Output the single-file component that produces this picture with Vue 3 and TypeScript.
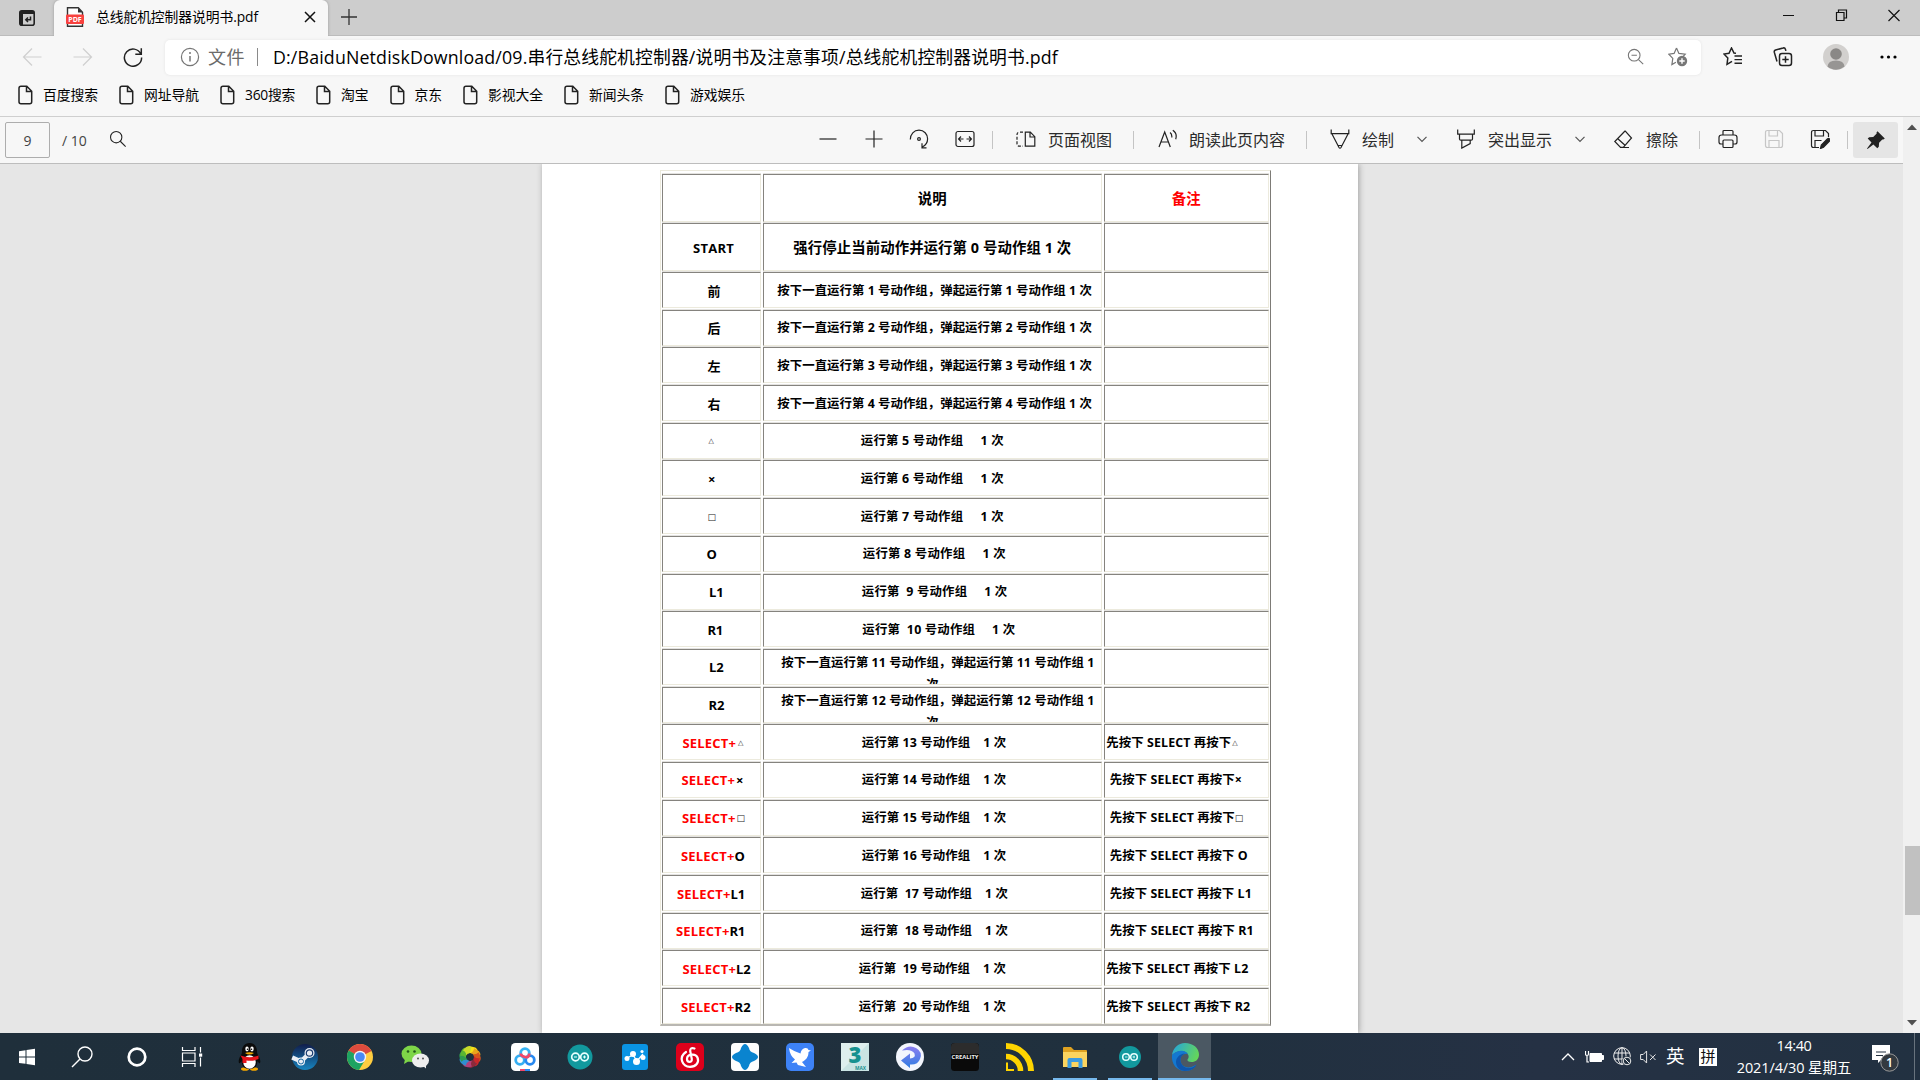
<script setup lang="ts">
import type { Directive } from 'vue'

interface Item { icon?: string; text?: string; gap: number; w: number; cls?: string }
interface Piece { text: string; gap: number; w: number; cls?: string }
interface Row { key: Piece[]; desc: Piece[]; note: Piece[]; cls?: string }

/* Spreads the glyphs of a label so that it fills the given width. */
const vFit: Directive<HTMLElement, number> = {
  mounted(el, { value }) {
    if (!value) return
    const n = (el.textContent ?? '').length
    const natural = el.getBoundingClientRect().width
    el.style.letterSpacing = `${(value - natural) / n}px`
  },
}

const icons: Record<string, string> = {
  back: '<path d="M19.500 10H1.500M10 1.500 1.500 10l8.500 8.500"/>',
  forward: '<path d="M.5 10h18M10 1.500 18.500 10 10 18.500"/>',
  reload: '<path d="M17.800 7A8.600 8.600 0 1 0 18.600 10.500M18.300 1.200v6h-6" stroke-width="1.500"/>',
  info: '<circle cx="10" cy="10" r="8.600"/><path d="M10 9v5.500" stroke-width="1.500"/><circle cx="10" cy="6" r="1" fill="currentColor" stroke="none"/>',
  file: '<path d="M6 1.200h5.800l4.900 5v10.600q0 2-2 2H6q-2 0-2-2V3.200q0-2 2-2zM11.500 1.400v5h5" stroke-width="1.500"/>',
  zoomout: '<circle cx="8" cy="8" r="6.500"/><path d="M12.800 12.800 18 18M5 8h6"/>',
  staradd: '<path d="m8.500 1 2.400 5.400 6.300.8-2.500 2.600M8.500 1 6.100 6.400.8 7.200l4 4.200-.9 6.200 4-2.400"/><circle cx="14" cy="14" r="5.200" fill="#777" stroke="none"/><path d="M14 11.300v5.400M11.300 14h5.400" stroke="#fff" stroke-width="1.400"/>',
  favs: '<path d="m13 6.300-2-.2L8.500 1 6 6.200l-5 .8 3.800 4L4 17.300l5-3" stroke-width="1.500"/><path d="M11.500 9H19M11.500 12.600H19M11.500 16.200H19" stroke-width="1.400"/>',
  collect: '<rect x="6.500" y="6.500" width="12" height="12" rx="2.500" stroke-width="1.500"/><path d="M12.500 9.300v6.400M9.300 12.500h6.400M4 14.500 1.300 5.300c-.3-1.200.3-2 1.300-2.300l7.500-2c1-.3 2 .2 2.300 1.200l.5 1.700" stroke-width="1.500"/>',
  search: '<circle cx="8" cy="8" r="6.300"/><path d="m12.500 12.500 6 6"/>',
  minus: '<path d="M1.500 10h17"/>',
  plus: '<path d="M1.500 10h17M10 1.500v17"/>',
  rotate: '<path d="M1.300 10.500C1.300 5 5 1.200 10 1.200s8.600 4 8.600 8.600c0 3.500-2 6.600-5.300 8.200M17.500 18.900H13v-4.600"/><circle cx="10" cy="10" r="1.400"/>',
  fit: '<rect x="1" y="2.500" width="18" height="15" rx="2"/><path d="M3.800 10h4.700M6 7.500 3.600 10 6 12.500M16.200 10h-4.700M14 7.500l2.400 2.500-2.400 2.500"/>',
  pages: '<path d="M9.300 3.200h5l4.500 4.500v9.500H9.300zM14 3.400V8h4.600"/><path d="M7 3.200H3.500Q1 3.200 1 5.700v9Q1 17.200 3.500 17.200H7" stroke-dasharray="3 1.700"/>',
  read: '<path d="m1 18 5.700-15L12.300 18M3 13h7.500M12 3.500c1.500 1 2 3 1.800 5M14.800 1.200c3 2 4 5.500 2.900 9"/>',
  pen: '<path d="M1.200.5v4.200h17.600V.5M2 5l7 13.500c.5.900 1.500.9 2 0L18 5M8.500 16.500h3"/>',
  marker: '<path d="M1.700.5v4.700h16.600V.5M3.500 5.500V10q0 1.200 1.200 1.200h10.600q1.200 0 1.200-1.200V5.500M5.800 11.500v7.600l8.400-4.500v-3"/>',
  chevron: '<path d="m5.500 7.800 4.500 4.500 4.500-4.500"/>',
  eraser: '<path d="M12 2 1.800 12.500l5.500 5.700 3 .2L18.500 9 12.300 2zM4.800 9.700l7.500 6.800M7 18.500h9"/>',
  print: '<path d="M5 6V2.500Q5 1.500 6 1.500h8q1 0 1 1V6M5 15H3q-2 0-2-2V8.500Q1 6 3.500 6h13Q19 6 19 8.500V13q0 2-2 2h-2"/><rect x="5" y="11" width="10" height="7.500" rx="1"/>',
  save: '<path d="M1.500 3.500q0-2 2-2h12l3 3v12q0 2-2 2h-13q-2 0-2-2zM5 1.700V7h8.500V1.700M5 18.300V11.500h10v6.800"/>',
  saveas: '<path d="M9 18.500H3.500q-2 0-2-2v-13q0-2 2-2h12l3 3V8M5 1.700V7h8.500V1.700M5 18.300V11.500h6.500"/><path d="m10.500 19.500.8-3.500 6-6q1.300-1 2.200 0t0 2l-6 6.300z" fill="currentColor"/>',
  pin: '<path d="m11.500 1.200 7.300 7.300-1.500 1-1-.1-3.200 3.300-.3 4-1.500 1.500-3.900-3.700L1.500 19l-.5-.5 4.500-6L1.700 8.600l1.500-1.400 4-.2L10.700 3.500l-.2-1z" fill="currentColor" stroke="none"/>',
}

const bookmarks = [
  { text: '百度搜索', w: 55 }, { text: '网址导航', w: 55 }, { text: '360搜索', w: 50 }, { text: '淘宝', w: 27.5 },
  { text: '京东', w: 27.5 }, { text: '影视大全', w: 55 }, { text: '新闻头条', w: 55 }, { text: '游戏娱乐', w: 55 },
]

const tools: Item[] = [
  { icon: 'minus', gap: 691, w: 20 }, { icon: 'plus', gap: 26, w: 20 }, { icon: 'rotate', gap: 25, w: 20 },
  { icon: 'fit', gap: 26, w: 20 }, { gap: 17, w: 1, cls: 'sep' },
  { icon: 'pages', gap: 23, w: 20 }, { text: '页面视图', gap: 12, w: 64 }, { gap: 21, w: 1, cls: 'sep' },
  { icon: 'read', gap: 24, w: 20 }, { text: '朗读此页内容', gap: 11, w: 96 }, { gap: 21, w: 1, cls: 'sep' },
  { icon: 'pen', gap: 23, w: 20 }, { text: '绘制', gap: 12, w: 32 }, { icon: 'chevron', gap: 18, w: 20, cls: 'thin' },
  { icon: 'marker', gap: 24, w: 20 }, { text: '突出显示', gap: 12, w: 64 }, { icon: 'chevron', gap: 18, w: 20, cls: 'thin' },
  { icon: 'eraser', gap: 23, w: 20 }, { text: '擦除', gap: 13, w: 32 }, { gap: 21, w: 1, cls: 'sep' },
  { icon: 'print', gap: 18, w: 20 }, { icon: 'save', gap: 26, w: 20, cls: 'off' }, { icon: 'saveas', gap: 26, w: 20 },
  { gap: 17, w: 1, cls: 'sep' },
]

/* gap is measured from the inner left edge of the table cell */
const p = (text: string, gap: number, w: number, cls = ''): Piece => ({ text, gap, w, cls })
const hold = (n: number): Piece[] => [p(`按下一直运行第 ${n} 号动作组，弹起运行第 ${n} 号动作组 1 次`, 13.5, 314.500)]
const wrap = (n: number): Piece[] => [p(`按下一直运行第 ${n} 号动作组，弹起运行第 ${n} 号动作组 1`, 17.5, 313), p('次', 162.500, 12.5)]
const sel = (x: number, key: string, w: number, cls = ''): Piece[] => [p('SELECT+', x + 0.5, 53.500, 'red'), p(key, cls === 'tri' ? 2 : cls ? 1 : 0, w, cls)]

const rows: Row[] = [
  { key: [], desc: [p('说明', 154, 29)], note: [p('备注', 66.500, 29, 'red')], cls: 'tall' },
  { key: [p('START', 30, 41)], desc: [p('强行停止当前动作并运行第 0 号动作组 1 次', 29.500, 278)], note: [], cls: 'tall' },
  { key: [p('前', 44.500, 12.5)], desc: hold(1), note: [] },
  { key: [p('后', 44.500, 12.5)], desc: hold(2), note: [] },
  { key: [p('左', 44.500, 12.5)], desc: hold(3), note: [] },
  { key: [p('右', 44.500, 12.5)], desc: hold(4), note: [] },
  { key: [p('△', 45.500, 0, 'tri')], desc: [p('运行第 5 号动作组     1 次', 97, 143)], note: [] },
  { key: [p('×', 45, 0)], desc: [p('运行第 6 号动作组     1 次', 97, 143)], note: [] },
  { key: [p('□', 44.500, 0, 'box')], desc: [p('运行第 7 号动作组     1 次', 97, 143)], note: [] },
  { key: [p('O', 43.500, 0)], desc: [p('运行第 8 号动作组     1 次', 99, 143)], note: [] },
  { key: [p('L1', 46, 14.500)], desc: [p('运行第  9 号动作组     1 次', 98, 145.500)], note: [] },
  { key: [p('R1', 44.500, 15.500)], desc: [p('运行第  10 号动作组     1 次', 98.500, 153)], note: [] },
  { key: [p('L2', 46, 14.500)], desc: wrap(11), note: [], cls: 'wrap' },
  { key: [p('R2', 45.500, 16)], desc: wrap(12), note: [], cls: 'wrap' },
  { key: sel(19, '△', 0, 'tri'), desc: [p('运行第 13 号动作组    1 次', 98, 144.500)], note: [p('先按下 SELECT 再按下', 1, 125), p('△', 1, 0, 'tri')] },
  { key: sel(18, '×', 0, 'mul'), desc: [p('运行第 14 号动作组    1 次', 98, 144.500)], note: [p('先按下 SELECT 再按下', 4.500, 125), p('×', 0, 0)] },
  { key: sel(18.500, '□', 0, 'box'), desc: [p('运行第 15 号动作组    1 次', 98, 144.500)], note: [p('先按下 SELECT 再按下', 4.500, 125), p('□', 0, 0, 'box')] },
  { key: sel(17.500, 'O', 10), desc: [p('运行第 16 号动作组    1 次', 98, 144.500)], note: [p('先按下 SELECT 再按下 O', 4.500, 138)] },
  { key: sel(13.500, 'L1', 14.500), desc: [p('运行第  17 号动作组    1 次', 97, 147)], note: [p('先按下 SELECT 再按下 L1', 4.500, 142)] },
  { key: sel(12.500, 'R1', 15.500), desc: [p('运行第  18 号动作组    1 次', 97, 147)], note: [p('先按下 SELECT 再按下 R1', 4.500, 144)] },
  { key: sel(19, 'L2', 14.500), desc: [p('运行第  19 号动作组    1 次', 95, 147)], note: [p('先按下 SELECT 再按下 L2', 1, 142)] },
  { key: sel(17.500, 'R2', 16.500), desc: [p('运行第  20 号动作组    1 次', 95, 147)], note: [p('先按下 SELECT 再按下 R2', 1, 144)] },
]

const petals = Array.from({ length: 10 }, (_, i) => ({
  turn: `rotate(${i * 36} 14 14)`,
  fill: ['#f7e017', '#e9a51c', '#d9541c', '#c9282a', '#8a2a3b', '#b2407a', '#2f8fd0', '#2f9a50', '#5cb531', '#c9db2c'][i],
}))
</script>

<template>
  <div class="screen">
    <div class="tabs">
      <div class="tabmenu">
        <svg width="16" height="16" viewBox="0 0 16 16"><rect x=".8" y=".8" width="14.400" height="14.400" rx="2" fill="none" stroke="#222" stroke-width="1.600" /><path d="M1 1h14v3H4v11H1z" fill="#222" /><path d="M11.500 6.500v3.200H7M9 7.500 6.800 9.700 9 12" fill="none" stroke="#222" stroke-width="1.500" /></svg>
      </div>
      <div class="tab">
        <svg width="18" height="20" viewBox="0 0 18 20"><path d="M1.500.8h10.800l4.200 4.400v14H1.500z" fill="#fff" stroke="#333" stroke-width="1.400" /><path d="M12 .8v4.700h4.500z" fill="#333" /><rect y="7.500" width="18" height="9.500" rx="1" fill="#f8423f" /><text x="9" y="14.800" text-anchor="middle" font-size="7" font-weight="700" fill="#fff">PDF</text></svg>
        <span class="title"><span v-fit="162">总线舵机控制器说明书.pdf</span></span>
        <svg class="close" width="12" height="12" viewBox="0 0 12 12"><path d="m1 1 10 10M11 1 1 11" stroke="#111" stroke-width="1.500" /></svg>
      </div>
      <svg class="newtab" width="18" height="18" viewBox="0 0 18 18"><path d="M9 1v16M1 9h16" stroke="#333" stroke-width="1.300" /></svg>
      <svg class="winctl" width="118" height="14" viewBox="0 0 118 14" fill="none" stroke="#111" stroke-width="1.200">
        <path d="M0 7.500h11M105.500 2l11 11M116.500 2l-11 11" /><path d="M53.500 4.500h7.500v8h-7.500zM55.500 4.500v-2.500H63.500v8H61" />
      </svg>
    </div>

    <div class="address">
      <svg class="ico dim" viewBox="0 0 20 20" v-html="icons.back" />
      <svg class="ico dim fwd" viewBox="0 0 20 20" v-html="icons.forward" />
      <svg class="ico rel" viewBox="0 0 20 20" v-html="icons.reload" />
      <div class="box-url">
        <svg class="ico grey" viewBox="0 0 20 20" v-html="icons.info" />
        <span class="scheme"><span v-fit="37">文件</span></span>
        <i class="bar" />
        <span class="url"><span v-fit="785">D:/BaiduNetdiskDownload/09.串行总线舵机控制器/说明书及注意事项/总线舵机控制器说明书.pdf</span></span>
        <svg class="ico grey zo" viewBox="0 0 20 20" v-html="icons.zoomout" />
        <svg class="ico grey sa" viewBox="0 0 20 20" v-html="icons.staradd" />
      </div>
      <svg class="ico fv" viewBox="0 0 20 20" v-html="icons.favs" />
      <svg class="ico co" viewBox="0 0 20 20" v-html="icons.collect" />
      <svg class="avatar" viewBox="0 0 26 26"><circle cx="13" cy="13" r="13" fill="#d2d0ce" /><circle cx="13" cy="10" r="5.800" fill="#8a8886" /><path d="M4.500 22.500Q5 16.500 13 16.500t8.500 6A13 13 0 0 1 4.500 22.500" fill="#979593" /></svg>
      <svg class="dots" viewBox="0 0 18 4"><circle cx="2" cy="2" r="1.600" /><circle cx="8.500" cy="2" r="1.600" /><circle cx="15" cy="2" r="1.600" /></svg>
    </div>

    <div class="bookmarks">
      <div v-for="b in bookmarks" :key="b.text" class="bm">
        <svg class="ico" viewBox="0 0 20 20" v-html="icons.file" />
        <span class="lab" :style="{ width: b.w + 'px' }"><span v-fit="b.w">{{ b.text }}</span></span>
      </div>
    </div>

    <div class="viewer">
      <div class="main">
        <div class="toolbar">
          <div class="pageno">9</div>
          <span class="of">/ 10</span>
          <svg class="ico find" viewBox="0 0 20 20" v-html="icons.search" />
          <template v-for="(t, i) in tools" :key="i">
            <svg v-if="t.icon" class="ico" :class="t.cls" viewBox="0 0 20 20" :style="{ marginLeft: t.gap + 'px' }" v-html="icons[t.icon]" />
            <span v-else class="tl" :class="t.cls" :style="{ marginLeft: t.gap + 'px', width: t.w + 'px' }"><span v-if="t.text" v-fit="t.w">{{ t.text }}</span></span>
          </template>
          <div class="pinbtn"><svg class="ico" viewBox="0 0 20 20" v-html="icons.pin" /></div>
        </div>
        <div class="canvas">
          <div class="page">
            <div class="table">
              <div v-for="(r, i) in rows" :key="i" class="row" :class="r.cls">
                <div v-for="(cell, c) in [r.key, r.desc, r.note]" :key="c" class="cell" :class="'c' + c">
                  <span v-for="(s, k) in cell" :key="k" class="piece" :class="s.cls" :style="{ marginLeft: s.gap + 'px' }"><span v-fit="s.w">{{ s.text }}</span></span>
                </div>
              </div>
            </div>
          </div>
        </div>
      </div>
      <div class="scroll">
        <svg width="12" height="7" viewBox="0 0 12 7"><path d="M6 .5 11 6H1z" fill="#505050" /></svg>
        <div class="thumb" />
        <svg width="12" height="7" viewBox="0 0 12 7"><path d="M6 6.500 11 1H1z" fill="#505050" /></svg>
      </div>
    </div>

    <div class="taskbar">
      <div class="slot"><svg viewBox="0 0 28 28"><path d="M6 8.200 12.500 7.200V13.500H6zM13.500 7 22 5.800v7.700H13.500zM6 14.500h6.500v6.300L6 19.900zM13.500 14.500H22v7.800L13.500 21z" fill="#fff" /></svg></div>
      <div class="slot"><svg viewBox="0 0 28 28"><circle cx="17" cy="11" r="7" fill="none" stroke="#fff" stroke-width="1.400" /><path d="M12 16 4 24" stroke="#fff" stroke-width="1.500" /></svg></div>
      <div class="slot"><svg viewBox="0 0 28 28"><circle cx="14" cy="14" r="8.300" fill="none" stroke="#fff" stroke-width="2.700" /></svg></div>
      <div class="slot"><svg viewBox="0 0 28 28"><path d="M4.500 4v3.500h12.500V4M4.500 24v-3.500h12.500V24M4.500 10h12.500v8H4.500zM22.500 4v5.500M22.500 14.500v9" fill="none" stroke="#fff" stroke-width="1.200" /><rect x="21" y="10.500" width="3.200" height="3.200" fill="#fff" /></svg></div>
      <div class="slot qq"><svg viewBox="0 0 28 28"><ellipse cx="9" cy="26" rx="4" ry="1.800" fill="#f5a800" /><ellipse cx="18" cy="26" rx="4" ry="1.800" fill="#f5a800" /><path d="M13.500 0C8.500 0 6 4 6 8c0 2-.5 3.500-1.500 5-1.600 2.500-2.200 5-1.500 7 .6 1 1.800-.5 2.500-2C6 24 9 26 13.500 26s7.500-2 8-8c.7 1.500 1.900 3 2.500 2 .7-2 .1-4.500-1.500-7-1-1.500-1.500-3-1.500-5 0-4-2.500-8-7.500-8" fill="#0b0b0b" /><ellipse cx="13.500" cy="19" rx="6.300" ry="6.700" fill="#fff" /><ellipse cx="11" cy="6" rx="1.700" ry="2.400" fill="#fff" /><ellipse cx="16" cy="6" rx="1.700" ry="2.400" fill="#fff" /><circle cx="11.500" cy="6.300" r=".8" /><circle cx="15.500" cy="6.300" r=".8" /><path d="M9 10q4.500-1.500 9 0-4.500 3-9 0" fill="#f5a800" /><path d="M4.500 12.500q9 3.500 18 0V16q-6 2.500-12 1.500V20H6.500v-4z" fill="#e5151c" /></svg></div>
      <div class="slot"><svg viewBox="0 0 28 28"><defs><linearGradient id="steam" x2="0" y2="1"><stop stop-color="#111d4b" /><stop offset="1" stop-color="#1785c0" /></linearGradient></defs><circle cx="14" cy="14" r="13" fill="url(#steam)" /><path d="M1.200 14.500 9 18M18.500 10 10.500 18" stroke="#e9eef5" stroke-width="4.500" /><circle cx="18.500" cy="10" r="5" fill="#e9eef5" /><circle cx="18.500" cy="10" r="3.200" fill="none" stroke="#1b3c70" stroke-width="1.200" /><circle cx="10" cy="18.500" r="4" fill="#e9eef5" /><circle cx="10" cy="18.500" r="2.500" fill="none" stroke="#1a6aa5" /></svg></div>
      <div class="slot"><svg viewBox="0 0 28 28"><circle cx="14" cy="14" r="13" fill="#ffcd40" /><path d="M14 14 2.500 7.800A13 13 0 0 1 25.500 8H14z" fill="#dd4b3e" /><path d="M14 14 2.700 7.500A13 13 0 0 0 13 27l6-10z" fill="#1da362" /><path d="M14 8h11.500L14 14z" fill="#dd4b3e" /><circle cx="14" cy="14" r="6.200" fill="#f4f4f4" /><circle cx="14" cy="14" r="4.800" fill="#4a8af4" /></svg></div>
      <div class="slot"><svg viewBox="0 0 28 28"><ellipse cx="10.500" cy="10.800" rx="10" ry="8.300" fill="#7ed648" /><path d="m4 16-1 5 5-3z" fill="#7ed648" /><circle cx="7" cy="8.500" r="1.300" fill="#23591c" /><circle cx="13.500" cy="8.500" r="1.300" fill="#23591c" /><ellipse cx="19.500" cy="17.500" rx="8.500" ry="7" fill="#eee" /><path d="m22 23 3 2.500V21z" fill="#eee" /><circle cx="17" cy="15.500" r="1" fill="#555" /><circle cx="22" cy="15.500" r="1" fill="#555" /></svg></div>
      <div class="slot"><svg viewBox="0 0 28 28"><path v-for="q in petals" :key="q.turn" d="M12 4.500Q19 2.500 21.500 6.500L16.500 10.500Q14 9.500 12 10.500 14 7 12 4.500z" :fill="q.fill" :transform="q.turn" /></svg></div>
      <div class="slot"><svg viewBox="0 0 28 28"><rect width="28" height="28" rx="4.500" fill="#fff" /><g fill="none" stroke-width="2.800"><circle cx="9" cy="17" r="4.300" stroke="#36aef2" /><circle cx="19" cy="17" r="4.300" stroke="#2788f0" /><circle cx="14" cy="10" r="4.300" stroke="#36b4f5" /></g><path d="M9.800 10.500q0 2.500 4.200 3.500t4.200-3.500" fill="none" stroke="#f2476a" stroke-width="2.800" /><path d="M9 26h5v2H9z" fill="#f2476a" /><path d="M14 26h5v2h-5z" fill="#2788f0" /></svg></div>
      <div class="slot"><svg viewBox="0 0 28 28"><circle cx="14" cy="14" r="12.500" fill="#12999e" /><g fill="none" stroke="#e8ffff" stroke-width="1.700"><circle cx="9.500" cy="14" r="3.800" /><circle cx="18.500" cy="14" r="3.800" /></g><path d="M8 14h3M17 14h3M18.500 12.500v3" stroke="#e8ffff" /></svg></div>
      <div class="slot"><svg viewBox="0 0 28 28"><rect x="1" y="1" width="26" height="26" rx="3" fill="#0a94e4" /><path d="m6 15 6-3 4 6 6-7" fill="none" stroke="#fff" stroke-width="1.300" /><circle cx="6" cy="15.500" r="2.500" fill="#fff" /><circle cx="12" cy="11" r="3" fill="#fff" /><circle cx="15.500" cy="18.500" r="3.500" fill="#fff" /><circle cx="22" cy="14.500" r="2.500" fill="#fff" /><circle cx="21" cy="8.500" r="1.600" fill="#fff" /></svg></div>
      <div class="slot"><svg viewBox="0 0 28 28"><rect width="28" height="28" rx="5" fill="#dd001b" /><path d="M18.500 5.500q-4.500-1.500-4.300 2.500l1.600 8c.4 4-4.800 3.800-4.800 0 0-5 8.500-6 10.500-1.500 2 5-1.500 9.300-7.500 9.300-7.500 0-12-9.500-4-14.800" fill="none" stroke="#fff" stroke-width="2.200" stroke-linecap="round" /></svg></div>
      <div class="slot"><svg viewBox="0 0 28 28"><rect width="28" height="28" rx="4" fill="#fdfdfd" /><path d="M10 5q4-8 8 0 .5 4 5 5 8 4 0 8-4.500 1-5 5-4 8-8 0-.5-4-5-5-8-4 0-8 4.500-1 5-5" fill="#0a84cf" /></svg></div>
      <div class="slot"><svg viewBox="0 0 28 28"><rect width="28" height="28" rx="5" fill="#3d82f6" /><path d="M3 5q6 4 11.500 5.500.5-4.500 4.500-5.500 3-.5 3.500 2l2.500.5-2.500 1.500c0 5-2.500 8-6.500 10l4 5-6-1.500q-3-.5-3.500-3l-5 .5 3.500-3.500Q4 13 3 5" fill="#fff" /></svg></div>
      <div class="slot"><svg viewBox="0 0 28 28"><rect width="28" height="28" fill="#c9e4e3" /><path d="M0 0h28L0 28z" fill="#deefee" /><text x="14" y="19.500" text-anchor="middle" font-size="22" font-weight="800" fill="#16918f">3</text><text x="19.500" y="26.500" text-anchor="middle" font-size="6" font-weight="700" textLength="11" lengthAdjust="spacingAndGlyphs" fill="#16918f">MAX</text></svg></div>
      <div class="slot"><svg viewBox="0 0 28 28"><defs><linearGradient id="swirl" x2="0" y2="1"><stop stop-color="#8b7df0" /><stop offset="1" stop-color="#2f7de2" /></linearGradient></defs><circle cx="14" cy="14" r="14" fill="#f3f6fd" /><path d="M6 7.500Q13 1 20 5t4 11q-2 6-10 5.500V25L5 17.500l9-7v5q6-.5 4.500-5-3-5-12.500-3" fill="url(#swirl)" /></svg></div>
      <div class="slot"><svg viewBox="0 0 28 28"><rect width="28" height="28" rx="3.500" fill="#0a0a0a" /><path d="M0 11V4Q0 0 4 0h20q4 0 4 4v7z" fill="#2c2c2c" /><text x="14" y="15.600" text-anchor="middle" font-size="5" font-weight="700" textLength="27" lengthAdjust="spacingAndGlyphs" fill="#eee">CREALITY</text></svg></div>
      <div class="slot"><svg viewBox="0 0 28 28"><g fill="none" stroke="#ffd500"><path d="M0 3a25 25 0 0 1 25 25" stroke-width="6" /><path d="M0 13.500A14.500 14.500 0 0 1 14.500 28" stroke-width="5.500" /><path d="M1 19.500v7.500h7" stroke-width="2" /></g></svg></div>
      <div class="slot run part"><svg viewBox="0 0 28 28"><path d="M2 5q0-1 1-1h7l3 3h12q1 0 1 1v3H2z" fill="#dfa221" /><path d="M2 9h24v15H2z" fill="#fbd45f" /><path d="M6.500 25V17q0-2 2-2h11q2 0 2 2v8h-4v-6h-7v6z" fill="#3c9be0" /></svg></div>
      <div class="slot run"><svg viewBox="0 0 28 28"><circle cx="14" cy="14" r="11" fill="#12999e" /><g fill="none" stroke="#e8ffff" stroke-width="1.500"><circle cx="10" cy="14" r="3.300" /><circle cx="18" cy="14" r="3.300" /></g><path d="M9 14h2.500M16.500 14H19M18 12.700v2.600" stroke="#e8ffff" stroke-width=".8" /></svg></div>
      <div class="slot run active"><svg viewBox="0 0 28 28"><defs><linearGradient id="edge" x1="0" x2="1" y1=".2" y2=".5"><stop stop-color="#25a6dc" /><stop offset="1" stop-color="#64d65a" /></linearGradient></defs><path d="M1 12C2 5 7 0 14 0c8 0 14 5 14 11.500 0 5-3.500 7.500-7.500 7.500-3 0-4.500-1-4-2.500 1.200-1.500 1.300-2.500 1-4C16 7 7 6 1 12" fill="url(#edge)" /><path d="M1 12C7 6 15 7 17 11c-6-1-9 4-7 9 2 4.500 8 6.500 15.500 1.500C23 26 19 28 14 28 6 28 0 21 1 12" fill="#1478d0" /><path d="M10 20q2 5 8 5 4 0 7.500-3.500Q23 28 14 28c-5 0-9-4-9-9 0-4 3-8 9-8.500-4 2-5.500 5.500-4 9.500" fill="#0f56ad" /></svg></div>

      <div class="tray">
        <svg class="t-up" width="14" height="8" viewBox="0 0 14 8"><path d="m1 7 6-6 6 6" fill="none" stroke="#fff" stroke-width="1.300" /></svg>
        <svg class="t-bat" width="19" height="14" viewBox="0 0 19 14"><path d="M5 3.500h11.500v8H5zM17 5.500h1.500v4H17z" fill="#fff" stroke="#fff" /><path d="M.5 1v3q0 1.500 1.500 1.500T3.500 4V1M2 5v7h2" fill="none" stroke="#fff" stroke-width="1.200" /></svg>
        <svg class="t-net" width="19" height="19" viewBox="0 0 19 19"><g fill="none" stroke="#eee"><circle cx="9" cy="9" r="8.300" /><ellipse cx="9" cy="9" rx="4" ry="8.300" /><path d="M1 6h16M1 12h10M9 1v16" /></g><circle cx="14" cy="14" r="4.800" fill="#223040" /><circle cx="14" cy="14" r="3.800" fill="none" stroke="#eee" /><path d="m11.500 11.500 5 5" stroke="#eee" /></svg>
        <svg class="t-vol" width="17" height="14" viewBox="0 0 17 14"><path d="M.6 4.500h2.600L6.600 1v12L3.200 9.500H.6zM10 4.500l5.500 5.500M15.500 4.500 10 10" fill="none" stroke="#e6e6e6" /></svg>
        <span class="t-en">英</span>
        <span class="t-py">拼</span>
        <div class="clock"><span><span v-fit="35">14:40</span></span><span><span v-fit="114.500">2021/4/30 星期五</span></span></div>
        <svg class="t-msg" width="28" height="28" viewBox="0 0 28 28"><path d="M0 0h18v15H9l-3 3v-3H0z" fill="#fff" /><path d="M4 7h10M4 10.500h7" stroke="#223040" stroke-width="1.200" /><circle cx="17.500" cy="17.500" r="8.700" fill="#333a40" stroke="#999" stroke-width="1" /><text x="17.500" y="22" text-anchor="middle" font-size="12.500" font-weight="600" fill="#fff">1</text></svg>
        <i class="peek" />
      </div>
    </div>
  </div>
</template>

<style>
body { margin: 0; overflow: hidden; }
</style>

<style scoped>
.screen { width: 1920px; height: 1080px; display: flex; flex-direction: column; overflow: hidden; background: #f7f7f7; font-family: "Open Sans", "Noto Sans CJK SC", sans-serif; color: #000; white-space: pre; }
.screen :deep(svg) { flex: none; display: block; }
.ico { width: 20px; height: 20px; fill: none; stroke: currentColor; stroke-width: 1.2; color: #222; flex: none; }
.tabs { height: 35px; background: #cdcdcd; display: flex; border-bottom: 1px solid #bcbcbc; position: relative; }
.tabmenu { width: 54px; padding: 10px 0 0 19px; box-sizing: border-box; }
.tab { width: 274px; height: 36px; background: #f7f7f7; border-radius: 6px 6px 0 0; display: flex; align-items: center; box-sizing: border-box; padding: 0 12px 2px 12px; box-shadow: 0 0 3px #999; clip-path: inset(0 -4px 0 -4px); }
.title { width: 162px; margin-left: 12px; font-size: 13.8px; line-height: 20px; }
.close { margin-left: auto; }
.newtab { margin: 8px 0 0 12px; }
.winctl { margin: 8px 19px 0 auto; }
.address { height: 42px; display: flex; align-items: center; padding: 1px 0 1px 22px; box-sizing: border-box; }
.dim { color: #cfcfcf; }
.fwd { margin-left: 31px; }
.rel { margin-left: 30px; }
.grey { color: #767676; }
.box-url { margin-left: 22px; width: 1536px; height: 35px; border-radius: 5px; background: #fff; display: flex; align-items: center; box-shadow: 0 0 3px #e2e2e2; }
.box-url > .ico:first-child { margin-left: 15px; }
.scheme { width: 37px; margin-left: 8px; font-size: 18px; line-height: 24px; color: #6b6b6b; }
.bar { width: 1px; height: 18px; margin: 0 15px 0 12px; background: #8a8a8a; }
.url { width: 785px; font-size: 17.8px; line-height: 24px; }
.zo { margin-left: 569px; width: 18px; height: 18px; }
.sa { margin-left: 23px; }
.fv { margin-left: 22px; }
.co { margin-left: 30px; }
.avatar { width: 26px; height: 26px; margin-left: 30px; }
.dots { width: 18px; height: 4px; margin-left: 31px; }
.bookmarks { height: 39px; display: flex; padding: 0 0 4px 15px; border-bottom: 1px solid #cfcfcf; box-sizing: border-box; align-items: center; }
.bm { display: flex; align-items: center; margin-right: 18px; height: 30px; }
.lab { margin-left: 8px; font-size: 13.8px; line-height: 20px; }
.viewer { display: flex; height: 916px; }
.main { width: 1903px; display: flex; flex-direction: column; }
.toolbar { height: 47px; box-sizing: border-box; border-bottom: 1px solid #bdbdbd; display: flex; align-items: center; padding-left: 5px; }
.pageno { width: 45px; height: 36px; box-sizing: border-box; border: 1px solid #adadad; border-radius: 2px; text-align: center; font-size: 14px; line-height: 35px; color: #444; }
.of { margin-left: 12px; width: 26px; font-size: 14px; color: #444; }
.find { width: 18px; height: 18px; margin-left: 21px; }
.toolbar > .ico { position: relative; top: -1px; }
.tl { font-size: 16px; line-height: 24px; color: #2b2b2b; flex: none; }
.sep { height: 18px; background: #c4c4c4; }
.thin { color: #555; }
.off { color: #c6c6c6; }
.pinbtn { margin-left: 5px; width: 45px; height: 36px; border-radius: 3px; background: #e5e5e5; display: flex; align-items: center; justify-content: center; }
.canvas { flex: 1; background: #e6e6e6; overflow: hidden; padding-left: 542px; }
.page { width: 816px; height: 869px; background: #fff; box-shadow: 1px 0 6px #a0a0a0; padding: 6px 0 0 118px; box-sizing: border-box; }
.table { width: 611px; height: 856px; box-sizing: border-box; border: 1px solid #ebe9dc; border-right-color: #7d7b76; border-bottom: 2px solid #b9b7b2; padding: 3px 1px 0; font-weight: 700; font-size: 12.4px; }
.row { display: flex; height: 37.7px; gap: 2px; }
.row.tall { height: 49px; font-size: 14.4px; }
.row .c0 { font-size: 13px; }
.cell { height: 36px; box-sizing: border-box; border: 1px solid #eceadd; border-top-color: #85837e; border-left-color: #85837e; box-shadow: 0 -1px 0 #e3e2df; display: flex; align-items: center; overflow: hidden; padding-top: 1px; }
.tall .cell { height: 48px; }
.c0 { width: 99px; }
.c1 { width: 340px; }
.c2 { width: 165px; }
.piece { flex: none; line-height: 20px; }
.red { color: #f00; }
.row .tri, .row .box { font-family: "DejaVu Sans", sans-serif; font-weight: 400; color: #222; }
.row .tri { font-size: 7px; }
.row .box { font-size: 9px; }
.wrap .c1 { flex-direction: column; align-items: flex-start; }
.wrap .c1 .piece { line-height: 22px; }
.wrap .c1 .piece:first-child { margin-top: 1px; }
.scroll { width: 17px; background: #f0f0f0; display: flex; flex-direction: column; align-items: center; padding: 7px 0; box-sizing: border-box; }
.thumb { width: 15px; height: 69px; background: #c1c1c1; margin: 715px 0 auto 2px; }
.taskbar { height: 47px; background: linear-gradient(90deg, #1f2f3b, #20303e 60%, #253144 80%, #223141); display: flex; }
.slot { width: 55px; height: 47px; display: flex; align-items: center; justify-content: center; box-sizing: border-box; flex: none; }
.slot:first-child { margin-left: -1px; }
.slot svg { width: 28px; height: 28px; }
.qq { margin-left: 3px; }
.run { box-shadow: inset 0 -2px 0 #76b9ed; width: 53px; margin: 0 1px; }
.run:not(.active) { width: 44px; margin: 0 5px 0 6px; }
.active { background: #4b5863; }
.tray { margin-left: auto; display: flex; align-items: center; height: 47px; color: #fff; }
.t-bat { margin-left: 10px; }
.t-net { margin-left: 9px; }
.t-vol { margin-left: 8px; }
.t-en { margin-left: 9px; width: 19px; font-size: 18.5px; line-height: 24px; position: relative; top: -1px; }
.t-py { margin-left: 14px; width: 18px; height: 18px; background: #fff; color: #111; font-size: 15px; line-height: 17px; text-align: center; }
.clock { margin-left: 19px; width: 116px; display: flex; flex-direction: column; align-items: center; font-size: 14.5px; line-height: 22px; }
.t-msg { margin-left: 20px; margin-top: 5px; }
.peek { width: 1px; height: 47px; margin: 0 5px 0 14px; background: #68737d; }
</style>
